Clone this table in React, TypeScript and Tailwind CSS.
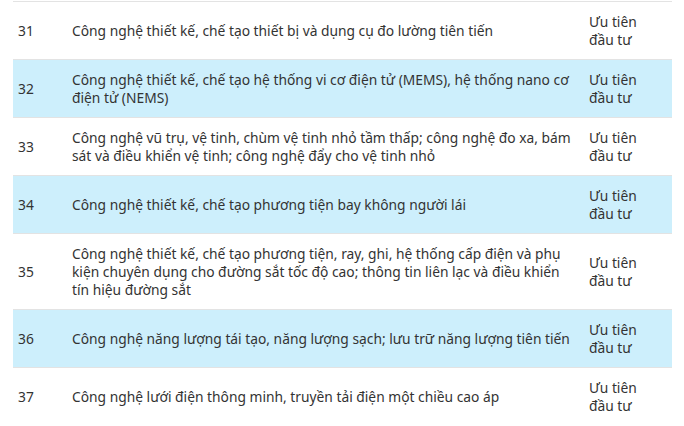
import React from 'react';

const rows = [
  { no: 31, text: 'Công nghệ thiết kế, chế tạo thiết bị và dụng cụ đo lường tiên tiến' },
  { no: 32, text: 'Công nghệ thiết kế, chế tạo hệ thống vi cơ điện tử (MEMS), hệ thống nano cơ điện tử (NEMS)' },
  { no: 33, text: 'Công nghệ vũ trụ, vệ tinh, chùm vệ tinh nhỏ tầm thấp; công nghệ đo xa, bám sát và điều khiển vệ tinh; công nghệ đẩy cho vệ tinh nhỏ' },
  { no: 34, text: 'Công nghệ thiết kế, chế tạo phương tiện bay không người lái' },
  { no: 35, text: 'Công nghệ thiết kế, chế tạo phương tiện, ray, ghi, hệ thống cấp điện và phụ kiện chuyên dụng cho đường sắt tốc độ cao; thông tin liên lạc và điều khiển tín hiệu đường sắt' },
  { no: 36, text: 'Công nghệ năng lượng tái tạo, năng lượng sạch; lưu trữ năng lượng tiên tiến' },
  { no: 37, text: 'Công nghệ lưới điện thông minh, truyền tải điện một chiều cao áp' },
];

export default function App() {
  return (
    <div className="w-[684px] h-[426px] overflow-hidden bg-white pl-[13px] pr-[12px] pt-px">
      <table className="w-full border-collapse text-[13.8px] leading-[18px] text-[#333] font-['Noto_Sans',sans-serif]">
        <tbody>
          {rows.map((r, i) => (
            <tr key={r.no} className={`border-t border-[#e3e3e3] ${i % 2 === 1 ? 'bg-[#cdeffc]' : 'bg-white'}`}>
              <td className="w-[54px] pl-[5px] pr-[5px] pt-[11px] pb-[10px] align-middle">{r.no}</td>
              <td className="pl-[5px] pr-[6px] pt-[11px] pb-[10px] align-middle">{r.text}</td>
              <td className="w-[88px] pl-[5px] pr-[5px] pt-[11px] pb-[10px] align-middle">Ưu tiên<br />đầu tư</td>
            </tr>
          ))}
        </tbody>
      </table>
    </div>
  );
}
